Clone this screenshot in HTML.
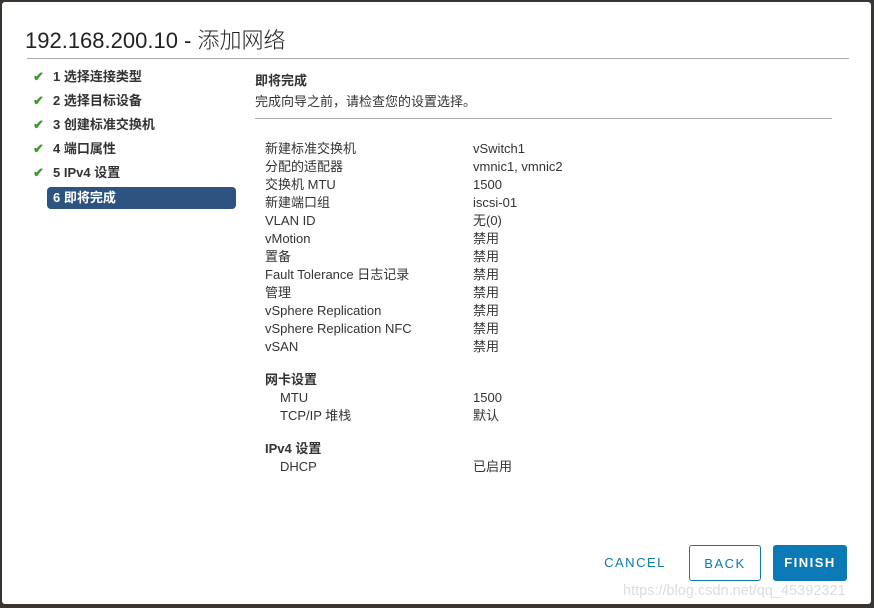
<!DOCTYPE html>
<html><head><meta charset="utf-8"><style>
*{margin:0;padding:0;box-sizing:border-box}
body{width:874px;height:608px;background:#3a3530;font-family:"Liberation Sans","Noto Sans CJK SC",sans-serif;color:#333;overflow:hidden;position:relative}
.dlg{position:absolute;left:2px;top:2px;width:869px;height:602px;background:#fff;border-radius:3px}
.title{position:absolute;left:23px;top:21px;font-size:22px;color:#222;font-weight:300}
.hr1{position:absolute;left:25px;top:56px;width:822px;height:1px;background:#aaa}
.step{position:absolute;left:31px;font-size:13px;color:#333;height:22px;line-height:22px;font-weight:bold}
.step .ck{color:#3c9a2e;font-weight:bold;display:inline-block;width:20px}
.cur{width:189px;background:#2d5480;color:#fff;border-radius:4px;padding-left:6px;font-weight:bold}
.t{position:absolute;font-size:13px;color:#333;line-height:18px}
.hr2{position:absolute;left:253px;top:116px;width:577px;height:1px;background:#aaa}
.btn{position:absolute;top:543px;height:36px;font-size:13px;letter-spacing:1.5px;text-align:center;line-height:36px;border-radius:3px}
</style></head><body>
<div class="dlg">
<div class="title">192.168.200.10 - 添加网络</div>
<div class="hr1"></div>
<div class="step" style="top:64px"><span class="ck">✔</span>1 选择连接类型</div>
<div class="step" style="top:88px"><span class="ck">✔</span>2 选择目标设备</div>
<div class="step" style="top:112px"><span class="ck">✔</span>3 创建标准交换机</div>
<div class="step" style="top:136px"><span class="ck">✔</span>4 端口属性</div>
<div class="step" style="top:160px"><span class="ck">✔</span>5 IPv4 设置</div>
<div class="step cur" style="top:185px;left:45px">6 即将完成</div>
<div class="t" style="left:253px;top:70px;font-weight:bold">即将完成</div>
<div class="t" style="left:253px;top:91px">完成向导之前，请检查您的设置选择。</div>
<div class="hr2"></div>
<div class="t" style="left:263px;top:138px">新建标准交换机<br>分配的适配器<br>交换机 MTU<br>新建端口组<br>VLAN ID<br>vMotion<br>置备<br>Fault Tolerance 日志记录<br>管理<br>vSphere Replication<br>vSphere Replication NFC<br>vSAN</div>
<div class="t" style="left:471px;top:138px">vSwitch1<br>vmnic1, vmnic2<br>1500<br>iscsi-01<br>无(0)<br>禁用<br>禁用<br>禁用<br>禁用<br>禁用<br>禁用<br>禁用</div>
<div class="t" style="left:263px;top:369px;font-weight:bold">网卡设置</div>
<div class="t" style="left:278px;top:387px">MTU<br>TCP/IP 堆栈</div>
<div class="t" style="left:471px;top:387px">1500<br>默认</div>
<div class="t" style="left:263px;top:438px;font-weight:bold">IPv4 设置</div>
<div class="t" style="left:278px;top:456px">DHCP</div>
<div class="t" style="left:471px;top:456px">已启用</div>
<div class="btn" style="left:598px;width:70px;color:#0a79b6">CANCEL</div>
<div class="btn" style="left:687px;width:72px;border:1px solid #0a79b6;color:#0a79b6">BACK</div>
<div class="btn" style="left:771px;width:74px;background:#0a79b6;color:#fff;font-weight:bold">FINISH</div>
<div class="t" style="left:621px;top:580px;font-size:14.5px;color:#ddd">https://blog.csdn.net/qq_45392321</div>
</div>
</body></html>
